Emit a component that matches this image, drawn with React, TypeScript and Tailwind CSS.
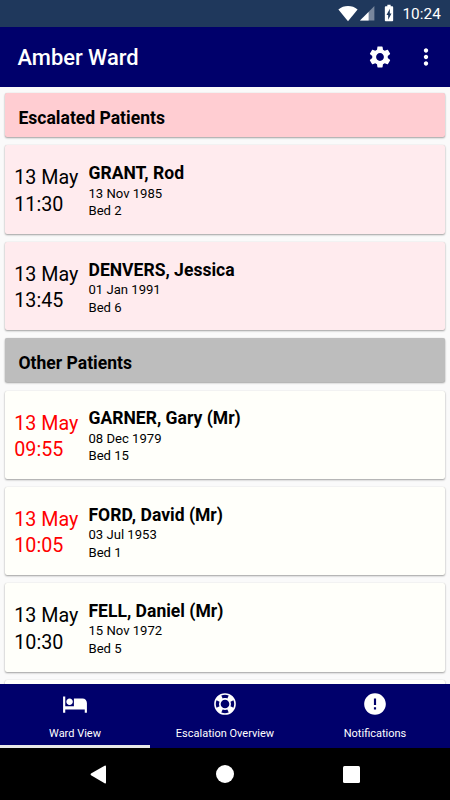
import clsx from "clsx";
import { MdBatteryChargingFull, MdError, MdHotel, MdMoreVert, MdSettings } from "react-icons/md";

type Patient = {
  name: string;
  dob: string;
  bed: string;
  time: string;
  overdue?: boolean;
};

const escalated: Patient[] = [
  { name: "GRANT, Rod", dob: "13 Nov 1985", bed: "Bed 2", time: "11:30" },
  { name: "DENVERS, Jessica", dob: "01 Jan 1991", bed: "Bed 6", time: "13:45" },
];

const others: Patient[] = [
  { name: "GARNER, Gary (Mr)", dob: "08 Dec 1979", bed: "Bed 15", time: "09:55", overdue: true },
  { name: "FORD, David (Mr)", dob: "03 Jul 1953", bed: "Bed 1", time: "10:05", overdue: true },
  { name: "FELL, Daniel (Mr)", dob: "15 Nov 1972", bed: "Bed 5", time: "10:30" },
];

const cardShadow = "rounded-[2px] shadow-[0_1px_2px_rgba(0,0,0,0.36),0_0_1px_rgba(0,0,0,0.14)]";

function StatusBar() {
  return (
    <div className="flex h-[27px] shrink-0 items-center justify-end bg-[#1f385c] pr-[9px] text-white">
      <svg width="20" height="17" viewBox="0 0 20 17" fill="currentColor">
        <path d="M0.4 4.4C5.8-.1 14.2-.1 19.6 4.4L10 16.2z" />
      </svg>
      <svg className="ml-[2px]" width="15" height="15" viewBox="0 0 15 15" fill="currentColor">
        <path d="M0 14.5L14.4 0v14.5z" opacity="0.4" />
        <path d="M0 14.5L8.6 5.9v8.6z" />
      </svg>
      <MdBatteryChargingFull className="mb-px ml-[4px]" size={20} />
      <span className="ml-[3px] pt-[2px] text-[15.3px] leading-none tracking-[0.1px]">10:24</span>
    </div>
  );
}

function SectionHeader({ title, className }: { title: string; className: string }) {
  return (
    <h2 className={clsx("flex h-[44.2px] shrink-0 items-center pt-[5px] pl-[13.2px] text-[17.55px] font-bold", cardShadow, className)}>
      {title}
    </h2>
  );
}

function PatientCard({ patient, className }: { patient: Patient; className: string }) {
  return (
    <article className={clsx("flex h-[88.3px] shrink-0 pl-[9px]", cardShadow, className)}>
      <div className={clsx("w-[74.2px] pt-[20px] text-[19.7px] leading-[26.5px]", patient.overdue && "text-[#ff0000]")}>
        <p>13 May</p>
        <p>{patient.time}</p>
      </div>
      <div className="pt-[16.7px]">
        <h3 className="text-[17.55px] leading-[22px] font-bold">{patient.name}</h3>
        <p className="pt-[0.4px] text-[13.1px] leading-[17.8px]">{patient.dob}</p>
        <p className="text-[13.1px] leading-[17.8px]">{patient.bed}</p>
      </div>
    </article>
  );
}

function LifeRing() {
  return (
    <svg width="26" height="26" viewBox="0 0 24 24" fill="currentColor">
      <path d="M19.79,15.41C20.74,13.24 20.74,10.75 19.79,8.59L17.05,9.83C17.65,11.21 17.65,12.78 17.06,14.17L19.79,15.41M15.42,4.21C13.25,3.26 10.76,3.26 8.59,4.21L9.83,6.94C11.22,6.35 12.79,6.35 14.18,6.95L15.42,4.21M4.21,8.58C3.26,10.76 3.26,13.24 4.21,15.42L6.95,14.17C6.35,12.79 6.35,11.21 6.95,9.82L4.21,8.58M8.59,19.79C10.76,20.74 13.25,20.74 15.42,19.78L14.18,17.05C12.8,17.65 11.22,17.65 9.84,17.06L8.59,19.79M12,2A10,10 0 0,1 22,12A10,10 0 0,1 12,22A10,10 0 0,1 2,12A10,10 0 0,1 12,2M12,8A4,4 0 0,0 8,12A4,4 0 0,0 12,16A4,4 0 0,0 16,12A4,4 0 0,0 12,8Z" />
    </svg>
  );
}

const tabs = [
  { label: "Ward View", icon: <MdHotel size={26} />, active: true },
  { label: "Escalation Overview", icon: <LifeRing /> },
  { label: "Notifications", icon: <MdError size={26} /> },
];

export default function App() {
  return (
    <div className="flex h-[800px] w-[450px] flex-col overflow-hidden bg-[#fafafa] font-['Roboto',sans-serif] text-black">
      <StatusBar />
      <header className="flex h-[60px] shrink-0 items-center bg-[#00006b] pl-[17.5px] text-white">
        <h1 className="flex-1 pt-[2px] text-[21.9px] font-medium">Amber Ward</h1>
        <button className="mr-[20px]" aria-label="Settings">
          <MdSettings size={26} />
        </button>
        <button className="mr-[11px]" aria-label="More options">
          <MdMoreVert size={26} />
        </button>
      </header>

      <main className="flex min-h-0 flex-1 flex-col gap-[8.1px] overflow-hidden px-[5.3px] pt-[6.2px]">
        <SectionHeader title="Escalated Patients" className="bg-[#ffcdd2]" />
        {escalated.map((p) => (
          <PatientCard key={p.name} patient={p} className="bg-[#ffebee]" />
        ))}
        <SectionHeader title="Other Patients" className="bg-[#bdbdbd]" />
        {others.map((p) => (
          <PatientCard key={p.name} patient={p} className="bg-[#fffffa]" />
        ))}
        {/* next row, mostly scrolled out of view */}
        <div className={clsx("h-[88.3px] shrink-0 bg-[#fffffa]", cardShadow)} />
      </main>

      <nav className="grid h-[64px] shrink-0 grid-cols-3 bg-[#00006b] text-white">
        {tabs.map((tab) => (
          <button
            key={tab.label}
            className={clsx(
              "flex flex-col items-center border-b-[3px] pt-[7px]",
              tab.active ? "border-[#e8e8e8]" : "border-transparent",
            )}
          >
            {tab.icon}
            <span className="mt-[10px] text-[11px] leading-[14px]">{tab.label}</span>
          </button>
        ))}
      </nav>

      {/* Android system buttons */}
      <div className="flex h-[52px] shrink-0 items-center justify-center bg-black text-white">
        <svg className="mr-[109px]" width="17" height="19" viewBox="0 0 17 19" fill="currentColor">
          <path d="M1 8.6L14.6 .7Q16 .1 16 1.5v16q0 1.3-1.4.7L1 10.3q-1-.9 0-1.7z" />
        </svg>
        <div className="h-[18px] w-[18px] rounded-full bg-white" />
        <div className="ml-[109px] h-[17px] w-[17px] rounded-[1.5px] bg-white" />
      </div>
    </div>
  );
}
